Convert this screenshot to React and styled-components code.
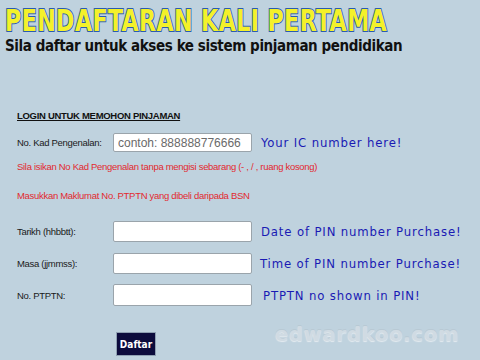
import React from "react";
import styled, { createGlobalStyle, css } from "styled-components";

const Global = createGlobalStyle`
  html, body { margin: 0; padding: 0; background: #bfd2de; }
  body { width: 480px; height: 360px; overflow: hidden; }
`;

const smallText = css`
  font-family: "Liberation Sans", sans-serif;
  font-size: 9.5px;
  letter-spacing: -0.3px;
  white-space: nowrap;
`;

const Page = styled.div`
  position: relative;
  width: 480px;
  height: 360px;
  background: #bfd2de;
  font-family: "Liberation Sans", sans-serif;
  overflow: hidden;
`;

const Header = styled.header`
  padding: 6px 0 0 5px;
  display: flex;
  flex-direction: column;
`;

const Title = styled.h1`
  margin: 0;
  font-family: "DejaVu Sans Condensed", "DejaVu Sans", sans-serif;
  font-weight: bold;
  font-size: 30px;
  line-height: 30px;
  color: #f4f12a;
  -webkit-text-stroke: 2px #2a5bb0;
  paint-order: stroke fill;
  letter-spacing: 0.5px;
  white-space: nowrap;
  transform-origin: left center;
  transform: scaleX(0.82);
`;

const Subtitle = styled.p`
  margin: 1px 0 0;
  font-family: "DejaVu Sans Condensed", "DejaVu Sans", sans-serif;
  font-weight: bold;
  font-size: 15px;
  line-height: 18px;
  letter-spacing: -0.4px;
  color: #111;
  white-space: nowrap;
`;

const Form = styled.form`
  margin: 55px 0 0 17px;
  display: flex;
  flex-direction: column;
`;

const SectionTitle = styled.div`
  ${smallText}
  font-weight: bold;
  color: #111;
  text-decoration: underline;
  line-height: 12px;
  margin-bottom: 11px;
`;

const Row = styled.div`
  display: grid;
  grid-template-columns: 96px 139px auto;
  align-items: center;
  height: ${(p) => p.$h || 21}px;
  margin-bottom: ${(p) => p.$mb || 0}px;
  margin-top: ${(p) => p.$mt || 0}px;
`;

const Label = styled.label`
  ${smallText}
  color: #1a1a1a;
`;

const Input = styled.input`
  box-sizing: border-box;
  width: 139px;
  height: ${(p) => p.$h || 21}px;
  margin: 0;
  border: 1px solid #9aa4ab;
  border-radius: 2px;
  background: #fff;
  padding: 0 4px;
  font-family: "Liberation Sans", sans-serif;
  font-size: 12px;
  &::placeholder { color: #6a6a6a; }
`;

const Note = styled.span`
  padding-left: ${(p) => p.$pl || 9}px;
  font-family: "DejaVu Sans Condensed", "DejaVu Sans", sans-serif;
  font-size: 13px;
  letter-spacing: 0.85px;
  color: #1a1ab4;
  white-space: nowrap;
`;

const Warn = styled.div`
  ${smallText}
  color: #e2292f;
  line-height: 12px;
  margin-top: ${(p) => p.$mt}px;
`;

const Button = styled.button`
  align-self: flex-start;
  margin: 26px 0 0 99px;
  width: 40px;
  height: 24px;
  padding: 0;
  background: #0c0b3c;
  border: 1px solid #8fa0b2;
  color: #fff;
  font-family: "DejaVu Sans Condensed", "DejaVu Sans", sans-serif;
  font-weight: bold;
  font-size: 10px;
`;

const Watermark = styled.div`
  position: absolute;
  left: 275px;
  top: 323px;
  font-family: "DejaVu Sans", sans-serif;
  font-weight: bold;
  font-size: 19.5px;
  letter-spacing: 0.8px;
  color: #d0dbe3;
  text-shadow: 0 1px 1px #e4ebf0, 0 -1px 0 #b8c9d4;
`;

export default function App() {
  return (
    <Page>
      <Global />
      <Header>
        <Title>PENDAFTARAN KALI PERTAMA</Title>
        <Subtitle>Sila daftar untuk akses ke sistem pinjaman pendidikan</Subtitle>
      </Header>
      <Form onSubmit={(e) => e.preventDefault()}>
        <SectionTitle>LOGIN UNTUK MEMOHON PINJAMAN</SectionTitle>
        <Row $h={19}>
          <Label>No. Kad Pengenalan:</Label>
          <Input $h={19} placeholder="contoh: 888888776666" />
          <Note>Your IC number here!</Note>
        </Row>
        <Warn $mt={9}>Sila isikan No Kad Pengenalan tanpa mengisi sebarang (- , / , ruang kosong)</Warn>
        <Warn $mt={17}>Masukkan Maklumat No. PTPTN yang dibeli daripada BSN</Warn>
        <Row $mb={11} $mt={19}>
          <Label>Tarikh (hhbbtt):</Label>
          <Input />
          <Note>Date of PIN number Purchase!</Note>
        </Row>
        <Row $mb={10}>
          <Label>Masa (jjmmss):</Label>
          <Input />
          <Note $pl={8}>Time of PIN number Purchase!</Note>
        </Row>
        <Row $h={22}>
          <Label>No. PTPTN:</Label>
          <Input $h={22} />
          <Note $pl={11}>PTPTN no shown in PIN!</Note>
        </Row>
        <Button type="submit">Daftar</Button>
      </Form>
      <Watermark>edwardkoo.com</Watermark>
    </Page>
  );
}
